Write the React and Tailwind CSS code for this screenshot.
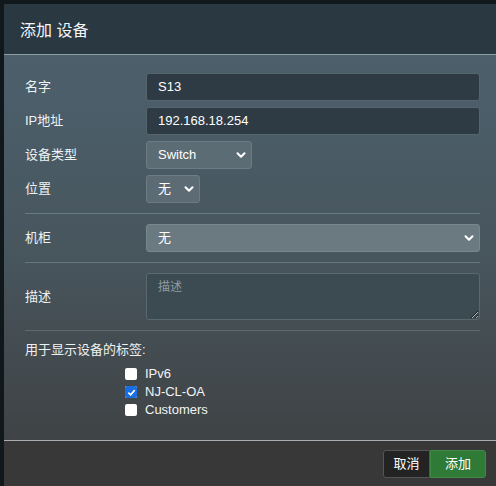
import React from 'react'
import { ChevronDown } from 'lucide-react'

const cjk = { fontFamily: '"Liberation Sans", "Noto Sans CJK SC", sans-serif' }

function Row({ label, children }) {
  return (
    <div className="flex items-center h-[28px]">
      <div className="w-[121px] text-[13px] text-[#eef2f4]">{label}</div>
      {children}
    </div>
  )
}

function Select({ value, className }) {
  return (
    <div className={`flex items-center justify-between h-[28px] rounded-[3px] border border-[#6d7c84] pl-[11px] pr-[3px] text-[13px] text-white ${className}`}>
      <span>{value}</span>
      <ChevronDown size={14} strokeWidth={3.5} className="text-white" />
    </div>
  )
}

function Check({ label, checked }) {
  return (
    <div className="flex items-center h-[18px] pl-[100px]">
      <span className="w-[12px] h-[12px] rounded-[2px] flex items-center justify-center mr-[8px] bg-white">
        {checked && (
          <span className="w-[12px] h-[12px] rounded-[2px] bg-[#1a6fe0] flex items-center justify-center">
            <svg width="9" height="9" viewBox="0 0 10 10">
              <path d="M1.5 5.2 L4 7.6 L8.6 2.4" fill="none" stroke="white" strokeWidth="1.8" />
            </svg>
          </span>
        )}
      </span>
      <span className="text-[13px] text-[#f2f4f5]">{label}</span>
    </div>
  )
}

export default function App() {
  return (
    <div className="w-[496px] h-[486px] bg-[#11181c] pl-[4px] pt-[4px] overflow-hidden" style={cjk}>
      <div className="flex flex-col h-[482px] bg-[#3a3a3a]">
        {/* header */}
        <div className="h-[51px] flex items-center px-[16px] pt-[4px] bg-[#2a3842] border-b border-[#8d9ca3] text-[16px] text-[#f4f6f7]">
          添加 设备
        </div>

        {/* body */}
        <div className="flex-1 bg-gradient-to-b from-[#4c606c] via-[#48565e] to-[#3f4345] pl-[21px] pr-[16px] pt-[18px] border-b border-[#a8aeb1]">
          <div className="flex flex-col gap-[6px]">
            <Row label="名字">
              <div className="flex-1 h-[28px] flex items-center rounded-[3px] border border-[#56656d] bg-[#2e3b44] px-[11px] text-[13px] text-white">
                S13
              </div>
            </Row>
            <Row label="IP地址">
              <div className="flex-1 h-[28px] flex items-center rounded-[3px] border border-[#56656d] bg-[#2e3b44] px-[11px] text-[13px] text-white">
                192.168.18.254
              </div>
            </Row>
            <Row label="设备类型">
              <Select value="Switch" className="w-[106px] bg-[#5c6c74]" />
            </Row>
            <Row label="位置">
              <Select value="无" className="w-[54px] bg-[#5d6c74]" />
            </Row>
          </div>

          <div className="h-px bg-[#6a7a82] mt-[10px]" />

          <div className="mt-[10px]">
            <Row label="机柜">
              <Select value="无" className="flex-1 bg-[#6a7a80] border-[#78878d]" />
            </Row>
          </div>

          <div className="h-px bg-[#66757c] mt-[10px]" />

          <div className="flex items-center mt-[10px] h-[47px]">
            <div className="w-[121px] text-[13px] text-[#eef2f4]">描述</div>
            <textarea
              readOnly
              placeholder="描述"
              className="flex-1 h-[47px] rounded-[3px] border border-[#5a6970] bg-[#3c4a52] px-[11px] py-[4px] text-[12px] text-white placeholder:text-[#8f9ba1] outline-none"
              style={cjk}
            />
          </div>

          <div className="h-px bg-[#5f6a70] mt-[10px]" />

          <div className="mt-[10px] h-[18px] flex items-center text-[13px] text-[#eef1f2]">用于显示设备的标签:</div>

          <div className="mt-[6px] flex flex-col">
            <Check label="IPv6" />
            <Check label="NJ-CL-OA" checked />
            <Check label="Customers" />
          </div>
        </div>

        {/* footer */}
        <div className="h-[45px] flex justify-end items-start pt-[9px] pr-[10px] bg-[#383838]">
          <div className="flex">
            <button className="h-[28px] w-[47px] rounded-l-[3px] border border-[#555] bg-[#232323] text-[13px] text-white">取消</button>
            <button className="h-[28px] w-[56px] rounded-r-[3px] border border-[#3f8a47] bg-[#2e7a36] text-[13px] text-white">添加</button>
          </div>
        </div>
      </div>
    </div>
  )
}
